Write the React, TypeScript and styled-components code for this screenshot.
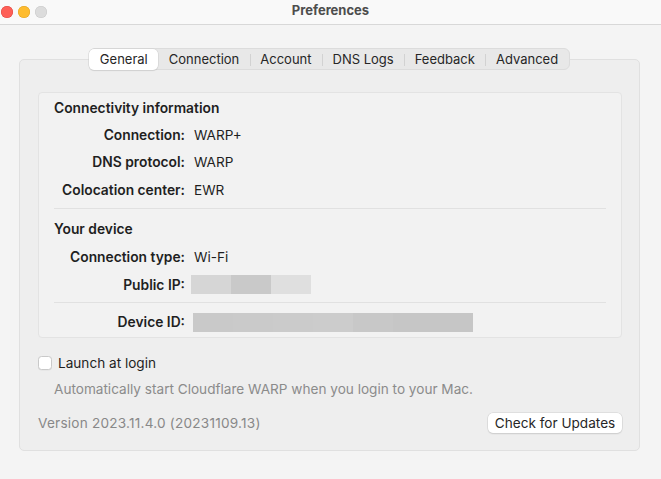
import React from "react";
import styled, { createGlobalStyle } from "styled-components";

const Global = createGlobalStyle`
  html, body { margin: 0; padding: 0; background: #f4f4f4; }
  body { font-family: "Inter", "Noto Sans", sans-serif; font-size: 13px; color: #1f1f1f; -webkit-font-smoothing: antialiased; }
  * { box-sizing: border-box; }
`;

const Window = styled.div`
  width: 661px;
  height: 479px;
  background: #f4f4f4;
  display: flex;
  flex-direction: column;
  overflow: hidden;
`;

const TitleBar = styled.div`
  height: 25px;
  flex: none;
  background: #f9f9f9;
  border-bottom: 1px solid #d8d8d8;
  display: grid;
  grid-template-columns: 1fr auto 1fr;
  align-items: center;
  padding: 0 1px;
`;

const Lights = styled.div`
  display: flex;
  gap: 5px;
  align-items: center;
`;

const Light = styled.span<{ $c: string; $b: string }>`
  width: 12px;
  height: 12px;
  border-radius: 50%;
  background: ${(p) => p.$c};
  box-shadow: inset 0 0 0 0.5px ${(p) => p.$b};
`;

const Title = styled.div`
  font-weight: 700;
  font-size: 13px;
  color: #4d4d4d;
  margin-top: -4px;
`;

const Body = styled.div`
  display: flex;
  flex-direction: column;
  align-items: center;
  padding: 23px 21px 0 19px;
`;

const TabBar = styled.div`
  position: relative;
  z-index: 1;
  display: flex;
  align-items: center;
  height: 22px;
  background: #e8e8e8;
  border: 1px solid #dcdcdc;
  border-radius: 6px;
`;

const Tab = styled.div<{ $active?: boolean; $sep?: boolean }>`
  position: relative;
  height: 21px;
  display: flex;
  align-items: center;
  justify-content: center;
  padding: 0 10.5px;
  font-size: 13px;
  color: #262626;
  border-radius: 5px;
  background: ${(p) => (p.$active ? "#ffffff" : "transparent")};
  box-shadow: ${(p) => (p.$active ? "0 0 0 0.5px #cfcfcf, 0 1px 1px rgba(0,0,0,0.12)" : "none")};
  margin: ${(p) => (p.$active ? "-1px 0 -1px -1px" : "0")};
  &::before {
    content: "";
    display: ${(p) => (p.$sep ? "block" : "none")};
    position: absolute;
    left: 0;
    top: 5px;
    height: 12px;
    width: 1px;
    background: #d2d2d2;
  }
`;

const GroupBox = styled.div`
  align-self: stretch;
  margin-top: -11px;
  height: 392px;
  background: #eeeeee;
  border: 1px solid #e0e0e0;
  border-radius: 5px;
  padding: 32px 17px 0 18px;
  display: flex;
  flex-direction: column;
`;

const InfoPanel = styled.div`
  background: #f2f2f2;
  border: 1px solid #e3e3e3;
  border-radius: 4px;
  padding: 0 15px;
  height: 246px;
  display: flex;
  flex-direction: column;
`;

const Heading = styled.div<{ $top: number; $bottom: number }>`
  font-weight: 600;
  font-size: 13.8px;
  line-height: 16px;
  margin-top: ${(p) => p.$top}px;
  margin-bottom: ${(p) => p.$bottom}px;
`;

const Row = styled.div`
  display: grid;
  grid-template-columns: 131px 1fr;
  column-gap: 9px;
  height: 27.5px;
  align-items: center;
`;

const Label = styled.div`
  text-align: right;
  font-weight: 600;
  font-size: 13.8px;
`;

const Value = styled.div`
  font-size: 13.6px;
  display: flex;
  align-items: center;
`;

const Divider = styled.div<{ $top: number; $bottom: number }>`
  height: 1px;
  background: #e1e1e1;
  margin: ${(p) => p.$top}px 0 ${(p) => p.$bottom}px;
`;

const Redacted = styled.div<{ $shift: number }>`
  display: flex;
  height: 19px;
  margin-left: ${(p) => p.$shift}px;
`;

const Block = styled.span<{ $c: string; $w: number }>`
  width: ${(p) => p.$w}px;
  height: 100%;
  background: ${(p) => p.$c};
`;

const CheckRow = styled.label`
  display: flex;
  align-items: center;
  gap: 6px;
  margin-top: 17px;
  height: 16px;
  font-size: 13.6px;
`;

const CheckBox = styled.span`
  width: 14px;
  height: 14px;
  border-radius: 3.5px;
  background: #ffffff;
  border: 1px solid #c9c9c9;
  box-shadow: 0 0.5px 0.5px rgba(0,0,0,0.06);
`;

const Hint = styled.div`
  margin-top: 10px;
  padding-left: 16px;
  font-size: 13.6px;
  color: #8b8b8b;
`;

const Footer = styled.div`
  display: flex;
  align-items: center;
  justify-content: space-between;
  margin-top: 16px;
`;

const Version = styled.div`
  font-size: 13.6px;
  letter-spacing: 0.22px;
  color: #888888;
`;

const Button = styled.button`
  font-family: inherit;
  font-size: 13.6px;
  color: #262626;
  background: #ffffff;
  border: none;
  border-radius: 5px;
  height: 20px;
  width: 134px;
  padding: 0;
  box-shadow: 0 0 0 0.5px #d0d0d0, 0 1px 1.5px rgba(0,0,0,0.14);
`;

const tabs = ["General", "Connection", "Account", "DNS Logs", "Feedback", "Advanced"];

export default function App() {
  return (
    <Window>
      <Global />
      <TitleBar>
        <Lights>
          <Light $c="#fe5f57" $b="#e0443e" />
          <Light $c="#febc2e" $b="#dea123" />
          <Light $c="#dcdcdc" $b="#c8c8c8" />
        </Lights>
        <Title>Preferences</Title>
        <div />
      </TitleBar>
      <Body>
        <TabBar>
          {tabs.map((t, i) => (
            <Tab key={t} $active={i === 0} $sep={i > 1}>
              {t}
            </Tab>
          ))}
        </TabBar>
        <GroupBox>
          <InfoPanel>
            <Heading $top={7} $bottom={5}>Connectivity information</Heading>
            <Row>
              <Label>Connection:</Label>
              <Value>WARP+</Value>
            </Row>
            <Row>
              <Label>DNS protocol:</Label>
              <Value>WARP</Value>
            </Row>
            <Row>
              <Label>Colocation center:</Label>
              <Value>EWR</Value>
            </Row>
            <Divider $top={4} $bottom={12} />
            <Heading $top={0} $bottom={7}>Your device</Heading>
            <Row>
              <Label>Connection type:</Label>
              <Value>Wi-Fi</Value>
            </Row>
            <Row>
              <Label>Public IP:</Label>
              <Value>
                <Redacted $shift={-3}>
                  <Block $c="#d6d6d6" $w={40} />
                  <Block $c="#c9c9c9" $w={40} />
                  <Block $c="#dfdfdf" $w={40} />
                </Redacted>
              </Value>
            </Row>
            <Divider $top={3} $bottom={6} />
            <Row>
              <Label>Device ID:</Label>
              <Value>
                <Redacted $shift={-1}>
                  <Block $c="#c9c9c9" $w={40} />
                  <Block $c="#cacaca" $w={40} />
                  <Block $c="#cbcbcb" $w={40} />
                  <Block $c="#cccccc" $w={40} />
                  <Block $c="#c8c8c8" $w={40} />
                  <Block $c="#c6c6c6" $w={80} />
                </Redacted>
              </Value>
            </Row>
          </InfoPanel>
          <CheckRow>
            <CheckBox />
            Launch at login
          </CheckRow>
          <Hint>Automatically start Cloudflare WARP when you login to your Mac.</Hint>
          <Footer>
            <Version>Version 2023.11.4.0 (20231109.13)</Version>
            <Button>Check for Updates</Button>
          </Footer>
        </GroupBox>
      </Body>
    </Window>
  );
}
